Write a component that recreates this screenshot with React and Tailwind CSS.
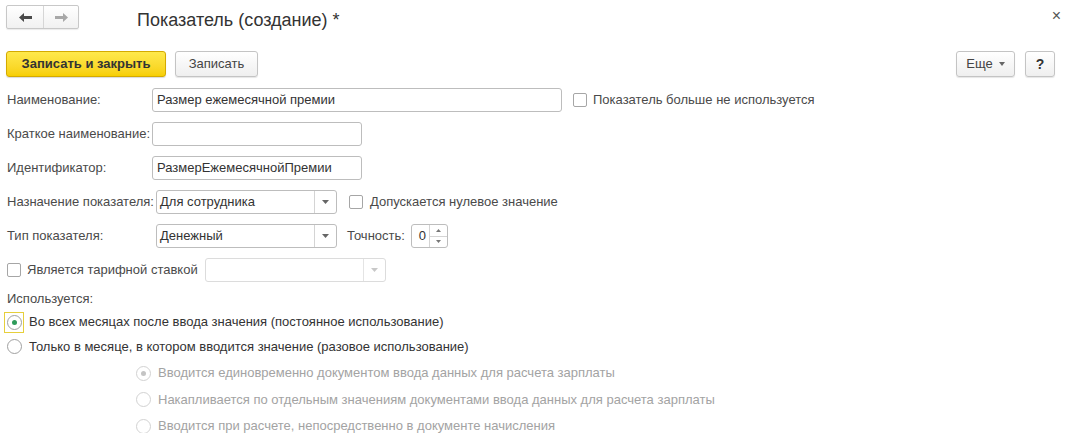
import React from "react";

const font = { fontFamily: '"Liberation Sans", Arial, sans-serif' };

const Checkbox = () => (
  <span className="inline-block w-[14px] h-[14px] border border-[#a6a6a6] rounded-[2px] bg-white shrink-0" />
);

const Radio = ({ checked, disabled }) => (
  <span
    className={`w-[15px] h-[15px] rounded-full border bg-white flex items-center justify-center shrink-0 ${
      disabled ? "border-[#d2d2d2]" : "border-[#a0a0a0]"
    }`}
  >
    {checked && (
      <span className={`w-[5px] h-[5px] rounded-full ${disabled ? "bg-[#c4c4c4]" : "bg-[#2e9b5a]"}`} />
    )}
  </span>
);

const Input = ({ width, value }) => (
  <div
    className={`${width} h-[24px] border border-[#bdbdbd] rounded-[3px] bg-white flex items-center px-[4px] text-[#333]`}
  >
    {value}
  </div>
);

const Select = ({ value, disabled }) => (
  <div
    className={`w-[181px] h-[24px] border rounded-[3px] bg-white flex items-stretch ${
      disabled ? "border-[#dcdcdc]" : "border-[#bdbdbd]"
    }`}
  >
    <div className="flex-1 flex items-center px-[3px] text-[#333]">{value}</div>
    <div
      className={`w-[22px] border-l flex items-center justify-center ${
        disabled ? "border-[#e4e4e4]" : "border-[#d4d4d4]"
      }`}
    >
      <svg width="7" height="4" viewBox="0 0 7 4">
        <path d="M0 0h7L3.5 4z" fill={disabled ? "#c8c8c8" : "#666"} />
      </svg>
    </div>
  </div>
);

const Row = ({ label, children }) => (
  <div className="h-[34px] flex items-center">
    <div className="w-[145px] text-[#4a4a4a] whitespace-nowrap">{label}</div>
    {children}
  </div>
);

export default function App() {
  return (
    <div className="w-[1068px] h-[433px] bg-white text-[13px] overflow-hidden" style={font}>
      {/* header */}
      <div className="h-[36px] flex items-start relative">
        <div className="ml-[6px] mt-[5px] w-[73px] h-[24px] border border-[#c8c8c8] rounded-[2px] flex bg-gradient-to-b from-white to-[#f1f1f1] shadow-[0_1px_1px_rgba(0,0,0,0.08)]">
          <div className="w-[37px] flex items-center justify-center border-r border-[#d6d6d6]">
            <svg width="13" height="9" viewBox="0 0 13 9">
              <path d="M0 4.5L5 0v3h8v3H5v3z" fill="#4a4a4a" />
            </svg>
          </div>
          <div className="flex-1 flex items-center justify-center">
            <svg width="13" height="9" viewBox="0 0 13 9">
              <path d="M13 4.5L8 0v3H0v3h8v3z" fill="#a8a8a8" />
            </svg>
          </div>
        </div>
        <div className="ml-[58px] mt-[7px] text-[18px] text-[#333]">Показатель (создание) *</div>
        <div className="absolute right-[7px] top-[4px] text-[16px] text-[#555]">×</div>
      </div>

      {/* toolbar */}
      <div className="mt-[15px] h-[26px] flex items-center px-[6px]">
        <div className="w-[160px] h-[26px] rounded-[3px] border border-[#d4aa00] bg-gradient-to-b from-[#ffe94a] to-[#f7cf00] flex items-center justify-center font-bold text-[#333] shadow-[0_1px_1px_rgba(0,0,0,0.15)]">
          Записать и закрыть
        </div>
        <div className="ml-[9px] w-[83px] h-[26px] rounded-[3px] border border-[#c4c4c4] bg-gradient-to-b from-white to-[#efefef] flex items-center justify-center text-[#444] shadow-[0_1px_1px_rgba(0,0,0,0.1)]">
          Записать
        </div>
        <div className="flex-1" />
        <div className="w-[59px] h-[26px] rounded-[3px] border border-[#c4c4c4] bg-gradient-to-b from-white to-[#efefef] flex items-center justify-center gap-[6px] text-[#444] shadow-[0_1px_1px_rgba(0,0,0,0.1)]">
          Еще
          <svg width="6" height="4" viewBox="0 0 6 4">
            <path d="M0 0h6L3 4z" fill="#666" />
          </svg>
        </div>
        <div className="ml-[10px] mr-[7px] w-[30px] h-[26px] rounded-[3px] border border-[#c4c4c4] bg-gradient-to-b from-white to-[#efefef] flex items-center justify-center text-[#333] font-bold text-[14px] shadow-[0_1px_1px_rgba(0,0,0,0.1)]">
          ?
        </div>
      </div>

      {/* form */}
      <div className="mt-[6px] pl-[7px]">
        <Row label="Наименование:">
          <Input width="w-[410px]" value="Размер ежемесячной премии" />
          <div className="ml-[11px] flex items-center gap-[6px] text-[#4a4a4a]">
            <Checkbox />
            Показатель больше не используется
          </div>
        </Row>
        <Row label="Краткое наименование:">
          <Input width="w-[210px]" value="" />
        </Row>
        <Row label="Идентификатор:">
          <Input width="w-[210px]" value="РазмерЕжемесячнойПремии" />
        </Row>
        <Row label="Назначение показателя:">
          <div className="ml-[4px]">
            <Select value="Для сотрудника" />
          </div>
          <div className="ml-[12px] flex items-center gap-[7px] text-[#4a4a4a]">
            <Checkbox />
            Допускается нулевое значение
          </div>
        </Row>
        <Row label="Тип показателя:">
          <div className="ml-[4px]">
            <Select value="Денежный" />
          </div>
          <div className="ml-[10px] text-[#4a4a4a]">Точность:</div>
          <div className="ml-[6px] w-[37px] h-[24px] border border-[#bdbdbd] rounded-[3px] bg-white flex items-stretch">
            <div className="flex-1 flex items-center justify-end pr-[3px] text-[#333]">0</div>
            <div className="w-[18px] border-l border-[#d4d4d4] flex flex-col">
              <div className="flex-1 flex items-center justify-center border-b border-[#d4d4d4]">
                <svg width="5" height="3" viewBox="0 0 5 3">
                  <path d="M0 3h5L2.5 0z" fill="#777" />
                </svg>
              </div>
              <div className="flex-1 flex items-center justify-center">
                <svg width="5" height="3" viewBox="0 0 5 3">
                  <path d="M0 0h5L2.5 3z" fill="#777" />
                </svg>
              </div>
            </div>
          </div>
        </Row>
        <div className="h-[34px] flex items-center">
          <Checkbox />
          <span className="ml-[6px] text-[#4a4a4a]">Является тарифной ставкой</span>
          <div className="ml-[7px]">
            <Select value="" disabled />
          </div>
        </div>

        <div className="h-[24px] flex items-center text-[#4a4a4a]">Используется:</div>
        <div className="h-[22px] flex items-center -ml-[3px]">
          <div className="w-[20px] h-[21px] border border-[#e6cf3c] flex items-center justify-center">
            <Radio checked />
          </div>
          <span className="ml-[5px] text-[#333]">Во всех месяцах после ввода значения (постоянное использование)</span>
        </div>
        <div className="h-[27px] flex items-center">
          <Radio />
          <span className="ml-[7px] text-[#333]">Только в месяце, в котором вводится значение (разовое использование)</span>
        </div>
        <div className="pl-[129px] text-[#a3a3a3]">
          <div className="h-[26px] flex items-center">
            <Radio checked disabled />
            <span className="ml-[7px]">Вводится единовременно документом ввода данных для расчета зарплаты</span>
          </div>
          <div className="h-[27px] flex items-center">
            <Radio disabled />
            <span className="ml-[7px]">Накапливается по отдельным значениям документами ввода данных для расчета зарплаты</span>
          </div>
          <div className="h-[26px] flex items-center">
            <Radio disabled />
            <span className="ml-[7px]">Вводится при расчете, непосредственно в документе начисления</span>
          </div>
        </div>
      </div>
    </div>
  );
}
